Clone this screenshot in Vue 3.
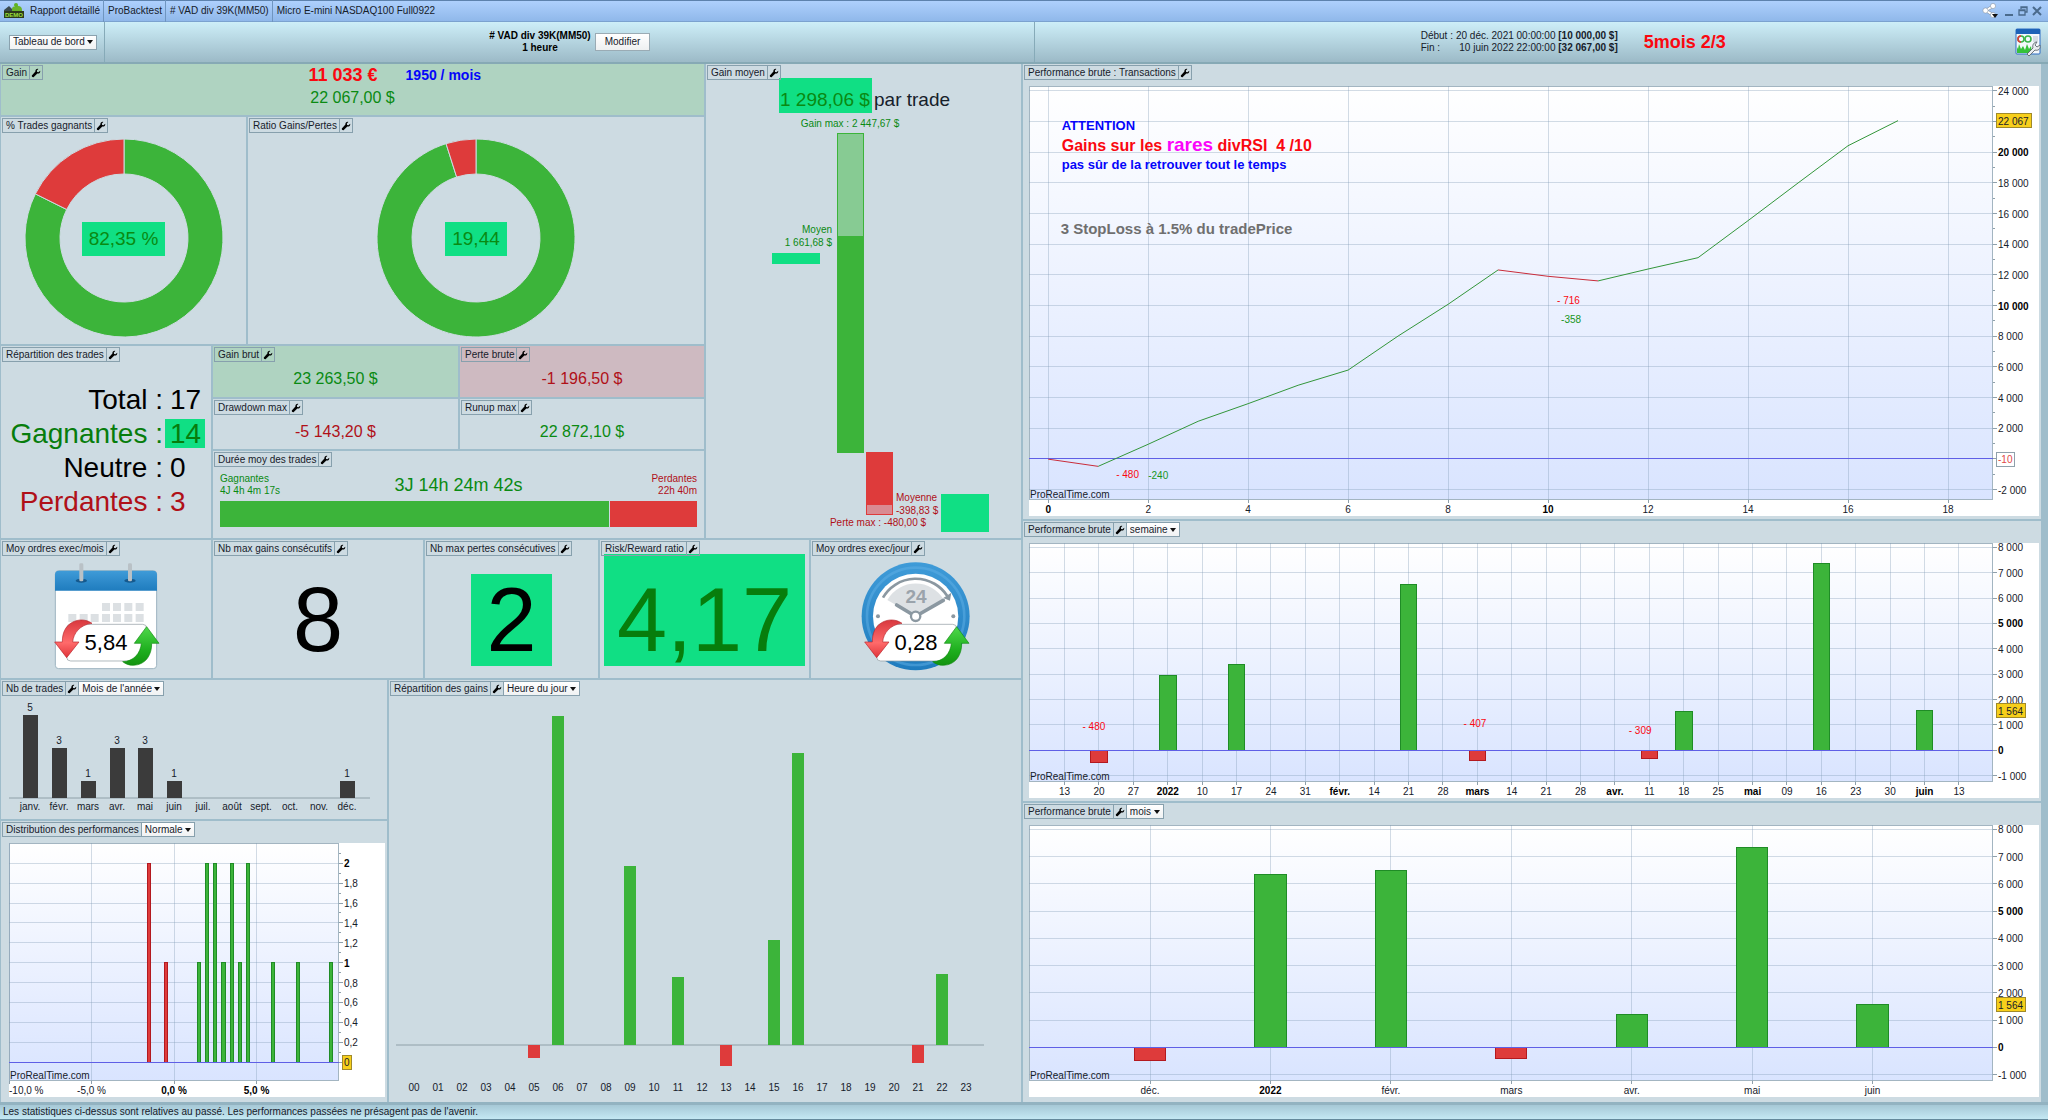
<script setup>
import { h } from 'vue'

const wrenchPath =
  'M11 3.2 9 5 7.3 4.7 7 3 8.8 1.1C7 .6 5 2 5.3 4.3L1 9C.5 10 2 11.5 3 11L7.6 6.6C10 7 11.6 5.2 11 3.2Z'

// Small header shown in the corner of every panel: title, settings button, optional period menu
const PanelTag = ({ label, option, plain }) =>
  h('div', { class: 'tag' }, [
    h('span', { class: 'tag-label' }, label),
    plain
      ? null
      : h('button', { class: 'tag-tool', type: 'button', 'aria-label': `Configurer ${label}` }, [
          h('svg', { viewBox: '0 0 12 12', width: 10, height: 10 }, [h('path', { d: wrenchPath })])
        ]),
    option
      ? h('span', { class: 'menu' }, [
          h('select', { 'aria-label': label }, [h('option', option)])
        ])
      : null
  ])
PanelTag.props = ['label', 'option', 'plain']

// Plot with a value axis on the right and a category axis underneath
const PlotChart = ({ chart: c }) => {
  const px = (v) => `${((v - c.x[0]) / (c.x[1] - c.x[0])) * 100}%`
  const py = (v) => `${((c.y[1] - v) / (c.y[1] - c.y[0])) * 100}%`
  const pw = (v) => `${(v / (c.x[1] - c.x[0])) * 100}%`
  const ph = (v) => `${(v / (c.y[1] - c.y[0])) * 100}%`
  return h('div', { class: 'chart' }, [
    h('svg', { class: 'plot' }, [
      ...c.xTicks.map((t) => h('line', { class: 'grid', x1: px(t.at), x2: px(t.at), y1: 0, y2: '100%' })),
      ...c.yTicks.map((t) => h('line', { class: 'grid', x1: 0, x2: '100%', y1: py(t.at), y2: py(t.at) })),
      ...(c.bars || []).map((b) =>
        h('rect', {
          class: b.v < 0 || b.loss ? 'bar loss' : 'bar win',
          x: px(b.at - c.barWidth / 2),
          y: py(Math.max(b.v, 0)),
          width: pw(c.barWidth),
          height: ph(Math.abs(b.v))
        })
      ),
      h('line', { class: 'zero', x1: 0, x2: '100%', y1: py(0), y2: py(0) }),
      ...(c.series || []).slice(1).map((v, i) =>
        h('line', {
          class: v < c.series[i] ? 'curve down' : 'curve up',
          x1: px(i), x2: px(i + 1), y1: py(c.series[i]), y2: py(v)
        })
      ),
      ...(c.notes || []).map((n) =>
        h('text', { class: ['note', n.kind], x: px(n.x), y: py(n.y) },
          n.parts ? n.parts.map((p) => h('tspan', { class: p.kind }, p.text)) : n.text)
      ),
      h('text', { x: 1, y: '100%', dy: -2 }, 'ProRealTime.com')
    ]),
    h('svg', { class: 'axis-y' }, [
      ...(c.yMinor || []).map((v) => h('line', { x1: 0, x2: 2, y1: py(v), y2: py(v) })),
      ...c.yTicks.map((t) => h('line', { x1: 0, x2: 4, y1: py(t.at), y2: py(t.at) })),
      ...c.yTicks.filter((t) => t.label).map((t) =>
        h('text', { class: { strong: t.bold }, x: 5, y: py(t.at), dy: 4 }, t.label)),
      ...c.marks.map((m) => [
        h('svg', { x: 3, y: py(m.at), width: m.w, height: 30, overflow: 'visible' }, [
          h('rect', { class: ['mark', m.kind], x: 0, y: -7, width: m.w, height: 14 }),
          h('text', { class: m.kind, x: 2, y: 4 }, m.label)
        ])
      ])
    ]),
    h('svg', { class: 'axis-x' }, [
      ...c.xTicks.map((t) => h('line', { x1: px(t.at), x2: px(t.at), y1: 0, y2: 3 })),
      ...c.xTicks.map((t) =>
        h('text', { class: { strong: t.bold }, x: px(t.at), y: 13, 'text-anchor': t.anchor || 'middle' }, t.label))
    ])
  ])
}
PlotChart.props = ['chart']

const thousands = (v) => {
  const s = String(Math.abs(v))
  return (v < 0 ? '-' : '') + (s.length > 3 ? `${s.slice(0, -3)} ${s.slice(-3)}` : s)
}
const range = (from, to, step) => {
  const out = []
  for (let v = from; v <= to; v += step) out.push(v)
  return out
}

const transactions = {
  x: [-0.384, 18.9],
  y: [-2674, 24326],
  xTicks: range(0, 18, 2).map((v) => ({ at: v, label: String(v), bold: v % 10 === 0 })),
  yTicks: range(-2000, 24000, 2000).map((v) => ({
    at: v, label: v === 0 || v === 22000 ? '' : thousands(v), bold: v % 10000 === 0
  })),
  yMinor: range(-1000, 23000, 2000),
  series: [-10, -480, 960, 2460, 3610, 4810, 5800, 8020, 10090, 12330, 11915, 11614, 12390, 13130, 15545, 18000, 20430, 22067],
  marks: [
    { at: 22067, label: '22 067', w: 35, kind: 'gold' },
    { at: -10, label: '-10', w: 18, kind: 'pale' }
  ],
  notes: [
    { x: 0.27, y: 21480, kind: 'blue n13', text: 'ATTENTION' },
    {
      x: 0.27, y: 20090, kind: 'red n16',
      parts: [{ text: 'Gains sur les ' }, { text: 'rares', kind: 'pink' }, { text: ' divRSI\u00a0 4 /10' }]
    },
    { x: 0.27, y: 18940, kind: 'blue n13', text: 'pas sûr de la retrouver tout le temps' },
    { x: 0.25, y: 14680, kind: 'grey n15', text: '3 StopLoss à 1.5% du tradePrice' },
    { x: 10.18, y: 10110, kind: 'red', text: '- 716' },
    { x: 10.26, y: 8870, kind: 'green', text: '-358' },
    { x: 1.36, y: -1220, kind: 'red', text: '- 480' },
    { x: 2, y: -1280, kind: 'green', text: '-240' }
  ]
}

const weekLabels = ['13', '20', '27', '2022', '10', '17', '24', '31', 'févr.', '14', '21', '28', 'mars', '14', '21', '28', 'avr.', '11', '18', '25', 'mai', '09', '16', '23', '30', 'juin', '13']
const kiloTicks = range(-1000, 8000, 1000).map((v) => ({ at: v, label: thousands(v), bold: v % 5000 === 0 }))

const weekly = {
  x: [-1.035, 26.99],
  y: [-1249, 8171],
  xTicks: weekLabels.map((label, at) => ({ at, label, bold: !/^\d\d$/.test(label) })),
  yTicks: kiloTicks,
  barWidth: 0.48,
  bars: [
    { at: 1, v: -480 }, { at: 3, v: 2960 }, { at: 5, v: 3370 }, { at: 10, v: 6530 }, { at: 12, v: -407 },
    { at: 17, v: -309 }, { at: 18, v: 1510 }, { at: 22, v: 7350 }, { at: 25, v: 1564 }
  ],
  marks: [{ at: 1564, label: '1 564', w: 29, kind: 'gold' }],
  notes: [
    { x: 0.52, y: 800, kind: 'red', text: '- 480' },
    { x: 11.6, y: 930, kind: 'red', text: '- 407' },
    { x: 16.4, y: 640, kind: 'red', text: '- 309' }
  ]
}

const monthly = {
  x: [-1.005, 7],
  y: [-1237, 8158],
  xTicks: ['déc.', '2022', 'févr.', 'mars', 'avr.', 'mai', 'juin'].map((label, at) => ({ at, label, bold: at === 1 })),
  yTicks: kiloTicks,
  barWidth: 0.26,
  bars: [-480, 6340, 6500, -420, 1215, 7340, 1564].map((v, at) => ({ at, v })),
  marks: [{ at: 1564, label: '1 564', w: 29, kind: 'gold' }]
}

const distribution = {
  x: [-10, 10],
  y: [-0.191, 2.204],
  xTicks: [
    { at: -10, label: '-10,0 %', anchor: 'start' },
    { at: -5, label: '-5,0 %' },
    { at: 0, label: '0,0 %', bold: true },
    { at: 5, label: '5,0 %', bold: true }
  ],
  yTicks: range(0, 10, 1).map((n) => ({
    at: n / 5, label: n ? String(n / 5).replace('.', ',') : '', bold: n % 5 === 0
  })),
  yMinor: range(0, 10, 1).map((n) => n / 5 + 0.1),
  barWidth: 0.2,
  bars: [
    { at: -1.5, v: 2, loss: true }, { at: -0.5, v: 1, loss: true }, { at: 1.5, v: 1 }, { at: 2, v: 2 },
    { at: 2.5, v: 2 }, { at: 3, v: 1 }, { at: 3.5, v: 2 }, { at: 4, v: 1 }, { at: 4.5, v: 2 },
    { at: 6, v: 1 }, { at: 7.5, v: 1 }, { at: 9.5, v: 1 }
  ],
  marks: [{ at: 0, label: '0', w: 9, kind: 'gold' }]
}

const months = ['janv.', 'févr.', 'mars', 'avr.', 'mai', 'juin', 'juil.', 'août', 'sept.', 'oct.', 'nov.', 'déc.']
const tradeCounts = [5, 3, 1, 3, 3, 1, 0, 0, 0, 0, 0, 1]
const monthX = (i) => Math.round(29 + i * 28.85)
const monthTop = (n) => 118 - Math.round(n * 16.5)

// Bar length per hour, in drawing units; negative is a loss
const hourly = { 5: -13, 6: 329, 9: 179, 11: 68, 13: -21, 15: 105, 16: 292, 21: -18, 22: 71 }
const hours = range(0, 23, 1)

// Ring slice between two fractions of the turn, clockwise from the top
const slice = (from, to) => {
  const pt = (r, f) => {
    const a = f * Math.PI * 2
    return `${(100 + r * Math.sin(a)).toFixed(2)} ${(100 - r * Math.cos(a)).toFixed(2)}`
  }
  const big = to - from > 0.5 ? 1 : 0
  return `M${pt(99, from)}A99 99 0 ${big} 1 ${pt(99, to)}L${pt(64, to)}A64 64 0 ${big} 0 ${pt(64, from)}Z`
}
</script>

<template>
  <div class="window">
    <header class="titlebar">
      <svg class="logo" viewBox="0 0 20 16" width="20" height="16">
        <path d="M0 15V7l5-4 4 4v8z" fill="#3b4a50" />
        <path d="M8 15V6c0-2 2-3 3-2l1-3 2 2c3 0 4 2 4 4v8z" fill="#6ab42a" />
        <circle cx="12" cy="2" r="2" fill="#5fb321" />
        <rect y="8" width="20" height="7" fill="#2d3a1a" />
        <text x="1" y="14" font-size="6" font-weight="bold" fill="#9be03a">DEMO</text>
      </svg>
      <span class="crumb">Rapport détaillé</span>
      <span class="crumb">ProBacktest</span>
      <span class="crumb"># VAD div 39K(MM50)</span>
      <span class="crumb">Micro E-mini NASDAQ100 Full0922</span>
      <div class="window-tools">
        <button type="button" aria-label="Partager">
          <svg viewBox="0 0 18 16" width="18" height="16">
            <path d="M11 3 4 7.500 11 12" fill="none" stroke="#8895a5" stroke-width="3" />
            <path d="M11 3 4 7.500 11 12" fill="none" stroke="#fff" stroke-width="2" />
            <g fill="#fff" stroke="#8895a5" stroke-width=".6">
              <circle cx="11" cy="3" r="2.600" /><circle cx="3.500" cy="7.500" r="2.600" /><circle cx="11" cy="12" r="2.600" />
            </g>
            <path d="M10 11h6l-3 4z" fill="#111" />
          </svg>
        </button>
        <button type="button" aria-label="Réduire">
          <svg viewBox="0 0 10 12" width="10" height="12"><path d="M1 10h8" stroke="#4a6a8c" stroke-width="2" /></svg>
        </button>
        <button type="button" aria-label="Restaurer">
          <svg viewBox="0 0 10 12" width="10" height="12" fill="none" stroke="#4a6a8c" stroke-width="1.300">
            <path d="M3 4V2h6v5H7M3 2.500h6" /><path d="M1 5h6v5H1zM1 5.500h6" />
          </svg>
        </button>
        <button type="button" aria-label="Fermer">
          <svg viewBox="0 0 10 12" width="10" height="12"><path d="M1 2l8 8M9 2l-8 8" stroke="#4a6a8c" stroke-width="2" /></svg>
        </button>
      </div>
    </header>

    <div class="toolbar">
      <div class="view-menu">
        <span class="menu"><select aria-label="Vue"><option>Tableau de bord</option></select></span>
      </div>
      <div class="strategy">
        <p class="strategy-name"># VAD div 39K(MM50)<br />1 heure</p>
        <button class="edit" type="button">Modifier</button>
      </div>
      <div class="period">
        <dl class="dates">
          <dt>Début :</dt><dd>20 déc. 2021 00:00:00 <b>[10 000,00 $]</b></dd>
          <dt>Fin :</dt><dd>10 juin 2022 22:00:00 <b>[32 067,00 $]</b></dd>
        </dl>
        <strong class="period-note">5mois 2/3</strong>
      </div>
      <button class="layout" type="button" aria-label="Disposition">
        <svg viewBox="0 0 26 28" width="26" height="28">
          <rect x="1" y="1" width="24" height="25" rx="1" fill="#f4f8fc" stroke="#2f6fc4" />
          <rect x="1" y="1" width="24" height="5" fill="#1d63b8" />
          <path d="M18 9h5M18 11h5M18 13h5" stroke="#b7c3cf" />
          <g fill="none" stroke-width="1.600">
            <circle cx="6" cy="11" r="3" stroke="#3bb54a" /><path d="M6 14a3 3 0 0 1 0-6" stroke="#e03a3a" />
            <circle cx="13" cy="11" r="3" stroke="#3bb54a" />
          </g>
          <path d="M2 25v-6l1 2 1-5 2 5 2-3 2 4 2-6 2 5 2-3 1 7z" fill="#35c239" />
          <path d="M12 26 18 20c-1-3 1-6 4-6l-2 3 2 2 3-2c1 4-2 6-5 5l-6 6z" fill="#e9edf0" stroke="#5d666e" stroke-width=".9" />
        </svg>
      </button>
    </div>

    <main class="board">
      <div class="left">
        <div class="upper">
          <div class="summary">
            <section class="panel gain">
              <PanelTag label="Gain" />
              <div class="gain-figures">
                <div class="gain-notes"><strong>11 033 €</strong><em>1950 / mois</em></div>
                <div class="figure win-text">22 067,00 $</div>
              </div>
            </section>

            <div class="rings">
              <section class="panel">
                <PanelTag label="% Trades gagnants" />
                <svg class="ring" viewBox="0 0 200 200">
                  <path :d="slice(0, 0.8235)" fill="#3cb43a" /><path :d="slice(0.8235, 1)" fill="#de3b3b" />
                </svg>
                <span class="ring-value">82,35 %</span>
              </section>
              <section class="panel">
                <PanelTag label="Ratio Gains/Pertes" />
                <svg class="ring" viewBox="0 0 200 200">
                  <path :d="slice(0, 0.9511)" fill="#3cb43a" /><path :d="slice(0.9511, 1)" fill="#de3b3b" />
                </svg>
                <span class="ring-value">19,44</span>
              </section>
            </div>

            <div class="details">
              <section class="panel">
                <PanelTag label="Répartition des trades" />
                <dl class="counts">
                  <dt>Total :</dt><dd>17</dd>
                  <dt class="win-text">Gagnantes :</dt><dd class="win-text lit">14</dd>
                  <dt>Neutre :</dt><dd>0</dd>
                  <dt class="loss-text">Perdantes :</dt><dd class="loss-text">3</dd>
                </dl>
              </section>
              <div class="amounts">
                <section class="panel tint-win"><PanelTag label="Gain brut" /><p class="amount win-text">23 263,50 $</p></section>
                <section class="panel tint-loss"><PanelTag label="Perte brute" /><p class="amount loss-text">-1 196,50 $</p></section>
                <section class="panel"><PanelTag label="Drawdown max" /><p class="amount loss-text">-5 143,20 $</p></section>
                <section class="panel"><PanelTag label="Runup max" /><p class="amount win-text">22 872,10 $</p></section>
                <section class="panel duration">
                  <PanelTag label="Durée moy des trades" />
                  <div class="duration-body">
                    <div class="duration-text">
                      <p class="win-text">Gagnantes<br />4J 4h 4m 17s</p>
                      <p class="win-text duration-mean">3J 14h 24m 42s</p>
                      <p class="loss-text">Perdantes<br />22h 40m</p>
                    </div>
                    <div class="duration-bar"><span class="d-win"></span><span class="d-loss"></span></div>
                  </div>
                </section>
              </div>
            </div>
          </div>

          <section class="panel">
            <PanelTag label="Gain moyen" />
            <svg class="fill" viewBox="0 0 315 474">
              <rect x="73" y="14" width="93" height="35" fill="#10df84" />
              <text class="s19 t-win" x="74" y="42">1 298,06 $</text>
              <text class="s19" x="168" y="42">par trade</text>
              <text class="t-win" x="144" y="63" text-anchor="middle">Gain max : 2 447,67 $</text>
              <rect x="131" y="69" width="27" height="320" fill="#3cb43a" />
              <rect x="132" y="70" width="25" height="102" fill="#87cb93" />
              <text class="t-win" x="126" y="169" text-anchor="end">Moyen</text>
              <text class="t-win" x="126" y="182" text-anchor="end">1 661,68 $</text>
              <rect x="66" y="189" width="48" height="11" fill="#10df84" />
              <rect x="160" y="388" width="27" height="63" fill="#de3b3b" />
              <rect x="161" y="441" width="25" height="9" fill="#d98b92" />
              <text class="t-loss" x="190" y="437">Moyenne</text>
              <text class="t-loss" x="190" y="450">-398,83 $</text>
              <text class="t-loss" x="172" y="462" text-anchor="middle">Perte max : -480,00 $</text>
              <rect x="235" y="430" width="48" height="38" fill="#10df84" />
            </svg>
          </section>
        </div>

        <div class="middle">
          <section class="panel">
            <PanelTag label="Moy ordres exec/mois" />
            <svg class="fill" viewBox="0 0 210 138">
              <defs>
                <linearGradient id="blue" x2="0" y2="1"><stop stop-color="#3f9bd8" /><stop offset="1" stop-color="#1f7cbe" /></linearGradient>
                <linearGradient id="redflow" x2="0" y2="1"><stop stop-color="#d8383e" /><stop offset=".6" stop-color="#ff6b6b" /><stop offset="1" stop-color="#e0343a" /></linearGradient>
                <linearGradient id="greenflow" x2="0" y2="1"><stop stop-color="#4fd84b" /><stop offset=".6" stop-color="#1fb01f" /><stop offset="1" stop-color="#12930f" /></linearGradient>
                <g id="flow">
                  <rect x="110" y="223" width="240" height="110" rx="12" fill="#fff" stroke="#8a969c" stroke-width="2" />
                  <path d="M186 220C170 208 145 206 125 218 105 230 97 250 97 276L74 276 110 323 147 276 128 276C130 250 150 224 186 220Z" fill="url(#redflow)" stroke="#b8262c" stroke-width="2" />
                  <path d="M350 230 387 280 365 280C366 310 350 345 310 346 297 346 287 342 278 335 310 335 332 310 334 280L313 280Z" fill="url(#greenflow)" stroke="#118a10" stroke-width="2" />
                </g>
              </defs>
              <g transform="translate(29 10) scale(.3333)">
                <rect x="76" y="62" width="304" height="294" rx="10" fill="#fff" stroke="#9db4c0" stroke-width="3" />
                <path d="M75 122V74q0-12 12-12H369q12 0 12 12V122Z" fill="url(#blue)" />
                <ellipse cx="154" cy="92" rx="17" ry="6" fill="#15598d" /><ellipse cx="300" cy="92" rx="17" ry="6" fill="#15598d" />
                <rect x="148" y="40" width="12" height="54" rx="4" fill="#b9c1c6" /><rect x="294" y="40" width="12" height="54" rx="4" fill="#b9c1c6" />
                <g fill="#dce0e3">
                  <rect v-for="x in [216, 249, 283, 317]" :key="'a' + x" :x="x" y="159" width="24" height="24" />
                  <rect v-for="x in [115, 149, 182, 216, 249, 283, 317]" :key="'b' + x" :x="x" y="192" width="24" height="24" />
                </g>
                <use href="#flow" />
              </g>
              <text class="s22" x="105" y="110" text-anchor="middle">5,84</text>
            </svg>
          </section>
          <section class="panel"><PanelTag label="Nb max gains consécutifs" /><p class="huge">8</p></section>
          <section class="panel"><PanelTag label="Nb max pertes consécutives" /><p class="huge lit">2</p></section>
          <section class="panel"><PanelTag label="Risk/Reward ratio" /><p class="huge lit ratio">4,17</p></section>
          <section class="panel">
            <PanelTag label="Moy ordres exec/jour" />
            <svg class="fill" viewBox="0 0 210 138">
              <g transform="translate(-221 -10) scale(.3333)">
                <circle cx="977" cy="259" r="162" fill="url(#blue)" />
                <circle cx="977" cy="259" r="146" fill="none" stroke="#5fb0e6" stroke-width="8" opacity=".5" />
                <circle cx="977" cy="259" r="128" fill="#fff" />
                <path d="M977 259 892 210A98 98 0 0 1 1062 210Z" fill="#dde1e4" />
                <path d="M879 203A113 113 0 0 1 1072 198" fill="none" stroke="#8b98a1" stroke-width="8" />
                <path d="M1060 204 1084 188 1080 212Z" fill="#8b98a1" />
                <path d="M920 225 965 252M989 252 1060 211" stroke="#8b98a1" stroke-width="11" stroke-linecap="round" />
                <circle cx="977" cy="259" r="14" fill="#fff" stroke="#8b98a1" stroke-width="7" />
                <circle cx="864" cy="259" r="6" fill="#8b98a1" /><circle cx="1090" cy="259" r="6" fill="#8b98a1" />
              </g>
              <text class="s19 dial" x="105" y="63" text-anchor="middle">24</text>
              <g transform="translate(29 10) scale(.3333)"><use href="#flow" /></g>
              <text class="s22" x="105" y="110" text-anchor="middle">0,28</text>
            </svg>
          </section>
        </div>

        <div class="lower">
          <div class="lower-left">
            <section class="panel">
              <PanelTag label="Nb de trades" option="Mois de l'année" />
              <svg class="fill" viewBox="0 0 386 139">
                <line x1="8" x2="369" y1="118" y2="118" stroke="#8fa0a8" />
                <g v-for="(n, i) in tradeCounts" :key="i">
                  <template v-if="n">
                    <rect :x="monthX(i) - 7" :y="monthTop(n)" width="15" :height="118 - monthTop(n)" fill="#3b3b3b" />
                    <text :x="monthX(i)" :y="monthTop(n) - 4" text-anchor="middle">{{ n }}</text>
                  </template>
                  <text :x="monthX(i)" y="130" text-anchor="middle">{{ months[i] }}</text>
                </g>
              </svg>
            </section>
            <section class="panel">
              <PanelTag label="Distribution des performances" option="Normale" :plain="true" />
              <div class="plot-area deep inset"><PlotChart :chart="distribution" /></div>
            </section>
          </div>
          <section class="panel">
            <PanelTag label="Répartition des gains" option="Heure du jour" />
            <svg class="fill" viewBox="0 0 632 422">
              <line x1="7" x2="595" y1="365" y2="365" stroke="#8fa0a8" />
              <g v-for="hr in hours" :key="hr">
                <rect v-if="hourly[hr]" :x="19 + hr * 24" :y="hourly[hr] > 0 ? 365 - hourly[hr] : 365" width="12"
                  :height="Math.abs(hourly[hr])" :fill="hourly[hr] > 0 ? '#3cb43a' : '#de3b3b'" />
                <text :x="25 + hr * 24" y="411" text-anchor="middle">{{ String(hr).padStart(2, '0') }}</text>
              </g>
            </svg>
          </section>
        </div>
      </div>

      <div class="right">
        <section class="panel">
          <PanelTag label="Performance brute : Transactions" />
          <div class="plot-area"><PlotChart :chart="transactions" /></div>
        </section>
        <section class="panel">
          <PanelTag label="Performance brute" option="semaine" />
          <div class="plot-area"><PlotChart :chart="weekly" /></div>
        </section>
        <section class="panel">
          <PanelTag label="Performance brute" option="mois" />
          <div class="plot-area deep"><PlotChart :chart="monthly" /></div>
        </section>
      </div>
    </main>

    <footer class="status">Les statistiques ci-dessus sont relatives au passé. Les performances passées ne présagent pas de l'avenir.</footer>
  </div>
</template>

<style>
body {
  background: #9fbdcb;
}
.tag {
  display: flex;
  align-self: start;
  justify-self: start;
  z-index: 1;
  height: 15px;
  margin: 1px 0 0 1px;
  border: 1px solid #87a0ad;
  line-height: 13px;
  box-sizing: border-box;
  white-space: nowrap;
}
.tag-label {
  padding: 0 2px 0 3px;
}
.tag-tool {
  display: flex;
  align-items: center;
  justify-content: center;
  width: 13px;
  padding: 0;
  border: 0;
  border-left: 1px solid #87a0ad;
  background: none;
}
.menu {
  position: relative;
  display: inline-flex;
  background: linear-gradient(#fff, #f0f2f3);
}
.menu select {
  appearance: none;
  border: 0;
  border-left: 1px solid #87a0ad;
  padding: 0 11px 0 3px;
  background: none;
  font: inherit;
  color: inherit;
}
.menu::after {
  content: '';
  position: absolute;
  right: 3px;
  top: calc(50% - 2px);
  border: 3px solid transparent;
  border-top: 4px solid #111;
  border-bottom: 0;
  pointer-events: none;
}
.chart {
  display: grid;
  grid-template: minmax(0, 1fr) 16px / minmax(0, 1fr) 46px;
  height: 100%;
  background: #fff;
}
.chart svg {
  width: 100%;
  height: 100%;
  overflow: visible;
  display: block;
}
.chart text {
  fill: #16202a;
}
.chart line,
.chart rect {
  shape-rendering: crispEdges;
}
.chart .plot {
  background: linear-gradient(#fff, #d9e4ff);
  box-shadow: inset 0 0 0 1px #a3b5c1;
}
.chart .grid {
  stroke: #7d97b3;
  stroke-opacity: 0.34;
}
.chart .zero {
  stroke: #5f5fe6;
}
.chart .curve {
  stroke-width: 1;
  shape-rendering: auto;
}
.chart .up {
  stroke: #33963a;
}
.chart .down {
  stroke: #c92c3a;
}
.chart .win {
  fill: #3cb43a;
  stroke: #1f8c26;
}
.chart .loss {
  fill: #de3b3b;
  stroke: #b3191f;
}
.chart .axis-y line,
.chart .axis-x line {
  stroke: #8fa0ab;
}
.chart text.strong {
  font-weight: bold;
  fill: #000;
}
.chart .mark.gold {
  fill: #f7cf1b;
  stroke: #a08a2a;
}
.chart .mark.pale {
  fill: #fff;
  stroke: #8fa0ab;
}
.chart text.pale {
  fill: #e04848;
}
.chart text.blue {
  fill: #0505fa;
}
.chart text.red {
  fill: #fa0810;
}
.chart text.green {
  fill: #17961c;
}
.chart text.grey {
  fill: #6f6f6f;
}
.chart .n13 {
  font-size: 13px;
  font-weight: bold;
}
.chart .n15 {
  font-size: 15px;
  font-weight: bold;
}
.chart .n16 {
  font-size: 16px;
  font-weight: bold;
}
.chart .pink {
  fill: #fa05fa;
  font-size: 19px;
}
</style>

<style scoped>
.window {
  display: flex;
  flex-direction: column;
  min-height: 100vh;
  background: #9fbdcb;
  color: #16202a;
  font: 10px/12px 'Liberation Sans', Arial, sans-serif;
}
p,
dl,
dd {
  margin: 0;
}
button {
  font: inherit;
  color: inherit;
}
.titlebar {
  display: flex;
  align-items: center;
  height: 22px;
  box-sizing: border-box;
  border-top: 1px solid #5d82ad;
  border-bottom: 1px solid #7ba2cf;
  background: linear-gradient(#aed0fd, #90b8ea);
}
.logo {
  margin: 0 2px 0 4px;
}
.crumb {
  padding: 0 3px 0 4px;
  line-height: 22px;
  border-right: 1px solid #6f95c0;
  white-space: nowrap;
}
.crumb:last-of-type {
  border-right: 0;
}
.window-tools {
  display: flex;
  gap: 4px;
  margin-left: auto;
  padding-right: 6px;
}
.window-tools button {
  display: flex;
  align-items: center;
  padding: 0;
  border: 0;
  background: none;
}
.toolbar {
  display: grid;
  grid-template-columns: 105px 930fr 967fr 45px;
  height: 42px;
  box-sizing: border-box;
  border-bottom: 2px solid #86a9b5;
  background: linear-gradient(#cdeef8, #9cbac7);
}
.view-menu {
  display: flex;
  align-items: center;
  padding-left: 9px;
  border-right: 1px solid #86aab8;
}
.view-menu .menu {
  border: 1px solid #8aa2ae;
}
.view-menu .menu select {
  height: 13px;
  border-left: 0;
}
.strategy {
  display: flex;
  align-items: center;
  justify-content: center;
  gap: 4px;
  border-right: 1px solid #86aab8;
}
.strategy-name {
  font-weight: bold;
  text-align: center;
  color: #000;
}
.edit {
  height: 18px;
  padding: 0 9px;
  border: 1px solid #9aabb4;
  background: linear-gradient(#fff, #eef0f1);
}
.period {
  display: grid;
  grid-template-columns: 1fr auto 1fr;
  align-items: center;
}
.dates {
  grid-column: 2;
  display: grid;
  grid-template-columns: auto auto;
  column-gap: 3px;
  white-space: nowrap;
}
.dates dd {
  text-align: right;
}
.period-note {
  padding-left: 26px;
  font-size: 18px;
  line-height: 20px;
  color: #fa0810;
}
.layout {
  display: flex;
  align-items: center;
  justify-content: center;
  padding: 0 0 0 4px;
  border: 0;
  background: none;
}
.board {
  flex: 1;
  display: grid;
  grid-template-columns: minmax(0, 1020fr) minmax(0, 1018fr);
  gap: 2px;
  padding: 0 7px 0 1px;
  background: #9fbdcb;
}
.panel {
  display: grid;
  grid-template: minmax(0, 1fr) / minmax(0, 1fr);
  min-width: 0;
  min-height: 0;
  background: #cddbe2;
}
.panel > * {
  grid-area: 1 / 1;
}
.fill {
  width: 100%;
  height: 100%;
}
.left,
.upper,
.summary,
.rings,
.details,
.amounts,
.middle,
.lower,
.lower-left,
.right {
  display: grid;
  gap: 2px;
  min-width: 0;
  min-height: 0;
}
.left {
  grid-template-rows: minmax(0, 474fr) minmax(0, 138fr) minmax(0, 422fr);
}
.upper {
  grid-template-columns: minmax(0, 703fr) minmax(0, 315fr);
}
.summary {
  grid-template-rows: minmax(0, 51fr) minmax(0, 227fr) minmax(0, 192fr);
}
.rings {
  grid-template-columns: minmax(0, 245fr) minmax(0, 456fr);
}
.details {
  grid-template-columns: minmax(0, 210fr) minmax(0, 491fr);
}
.amounts {
  grid-template: minmax(0, 51fr) minmax(0, 50fr) minmax(0, 87fr) / minmax(0, 245fr) minmax(0, 244fr);
}
.middle {
  grid-template-columns: minmax(0, 210fr) minmax(0, 210fr) minmax(0, 173fr) minmax(0, 209fr) minmax(0, 210fr);
}
.lower {
  grid-template-columns: minmax(0, 386fr) minmax(0, 632fr);
}
.lower-left {
  grid-template-rows: minmax(0, 139fr) minmax(0, 281fr);
}
.right {
  grid-template-rows: minmax(0, 455fr) minmax(0, 280fr) minmax(0, 299fr);
}
.gain,
.tint-win {
  background: #afd3c1;
}
.tint-loss {
  background: #cebac1;
}
.win-text {
  color: #0a8a12;
}
.loss-text {
  color: #b01018;
}
.lit {
  background: #10df84;
}
.gain-figures {
  justify-self: center;
  width: 88px;
  padding-top: 1px;
  white-space: nowrap;
}
.gain-notes {
  display: flex;
  gap: 28px;
  margin-bottom: 3px;
  line-height: 20px;
}
.gain-notes strong {
  font-size: 18px;
  color: #fa0810;
}
.gain-notes em {
  font-size: 14px;
  font-style: normal;
  font-weight: bold;
  color: #0505fa;
}
.figure,
.amount {
  font-size: 16px;
  line-height: 20px;
  text-align: center;
  white-space: nowrap;
}
.amount {
  padding-top: 23px;
}
.ring {
  align-self: end;
  justify-self: center;
  width: 200px;
  height: 200px;
  margin-bottom: 6px;
}
.ring path {
  stroke: #cddbe2;
  stroke-width: 1;
}
.ring-value {
  align-self: end;
  justify-self: center;
  margin-bottom: 88px;
  padding: 0 7px;
  background: #10df84;
  color: #0a8a12;
  font-size: 19px;
  line-height: 34px;
}
.counts {
  display: grid;
  grid-template-columns: 162px auto;
  grid-auto-rows: 34px;
  align-items: center;
  justify-content: start;
  column-gap: 2px;
  padding-top: 36px;
  font-size: 28px;
  line-height: 29px;
  color: #000;
  white-space: nowrap;
}
.counts dt {
  text-align: right;
}
.counts dd {
  justify-self: start;
  padding: 0 4px 0 5px;
}
.counts .win-text {
  color: #077d0c;
}
.duration {
  grid-column: 1 / 3;
}
.duration-body {
  display: flex;
  flex-direction: column;
  justify-content: flex-end;
  padding: 0 7px 11px;
}
.duration-text {
  display: grid;
  grid-template-columns: 1fr auto 1fr;
  align-items: center;
  margin-bottom: 4px;
}
.duration-text p:last-child {
  text-align: right;
}
.duration-mean {
  font-size: 18px;
  line-height: 20px;
}
.duration-bar {
  display: flex;
  gap: 1px;
  height: 26px;
}
.d-win {
  flex: 389;
  background: #3cb43a;
}
.d-loss {
  flex: 87;
  background: #de3b3b;
}
.fill text {
  fill: #16202a;
}
.fill .t-win {
  fill: #0a8a12;
}
.fill .t-loss {
  fill: #b01018;
}
.fill .s19 {
  font-size: 19px;
}
.fill .s22 {
  font-size: 22px;
  fill: #000;
}
.fill .dial {
  fill: #9aa3ab;
  font-weight: bold;
}
.huge {
  align-self: start;
  justify-self: center;
  margin-top: 34px;
  padding: 0 15px;
  font-size: 90px;
  line-height: 92px;
  color: #000;
}
.ratio {
  margin-top: 14px;
  padding: 20px 13px 0;
  color: #077d0c;
}
.plot-area {
  min-height: 0;
  padding: 22px 2px 3px 6px;
}
.plot-area.deep {
  padding-bottom: 5px;
}
.plot-area.inset {
  padding-left: 8px;
}
.status {
  height: 18px;
  box-sizing: border-box;
  padding-left: 3px;
  border-top: 3px solid #93b3c1;
  border-bottom: 1px solid #64899b;
  background: linear-gradient(#a6c8d6, #c4e8f3);
  line-height: 14px;
}
</style>
